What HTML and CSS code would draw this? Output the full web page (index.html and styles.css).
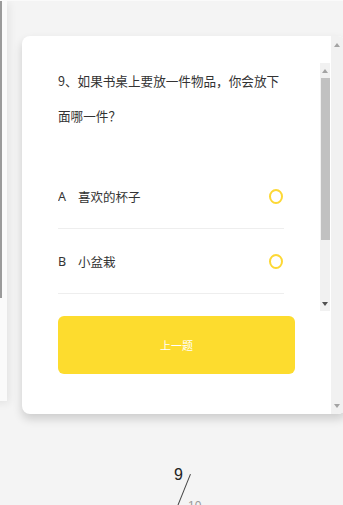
FILE: index.html
```html
<!DOCTYPE html>
<html lang="zh">
<head>
<meta charset="utf-8">
<link rel="stylesheet" href="styles.css">
</head>
<body>
<div class="stage">
  <div class="prev-card"><div class="prev-thumb"></div></div>
  <div class="card">
    <div class="card-body">
      <div class="scroll-area">
        <div class="scroll-content">
          <div class="question">9、如果书桌上要放一件物品，你会放下面哪一件？</div>
          <div class="options">
            <div class="option"><span class="opt-letter">A</span><span class="opt-text">喜欢的杯子</span><span class="radio"></span></div>
            <div class="option"><span class="opt-letter">B</span><span class="opt-text">小盆栽</span><span class="radio"></span></div>
          </div>
        </div>
        <div class="inner-bar">
          <div class="arrow up light"></div>
          <div class="thumb"></div>
          <div class="track"></div>
          <div class="arrow down dark"></div>
        </div>
      </div>
      <div class="btn">上一题</div>
    </div>
    <div class="outer-bar">
      <div class="arrow up light"></div>
      <div class="arrow down light"></div>
    </div>
  </div>
  <div class="pager">
    <span class="cur">9</span>
    <span class="slash"></span>
    <span class="total">10</span>
  </div>
</div>
</body>
</html>
```
FILE: styles.css
```css
* { box-sizing: border-box; }
html, body { margin: 0; padding: 0; }
body {
  background: #f4f4f4;
  font-family: "Noto Sans CJK SC", "Noto Sans", sans-serif;
  color: #333;
  overflow: hidden;
}
.stage {
  position: relative;
  width: 343px;
  height: 505px;
  overflow: hidden;
  padding-top: 35px;
  padding-left: 22px;
  border-top: 1px solid #fafafa;
}
.prev-card {
  position: absolute;
  left: -10px;
  top: 0;
  width: 17px;
  height: 400px;
  background: #fafafa;
  box-shadow: 2px 2px 8px rgba(0,0,0,0.08);
}
.prev-thumb {
  position: absolute;
  left: 10px;
  top: 0;
  width: 2px;
  height: 297px;
  background: #9a9a9a;
}
.card {
  width: 324px;
  height: 378px;
  background: #fff;
  border-radius: 8px;
  box-shadow: 0 5px 10px rgba(0,0,0,0.16);
  display: flex;
  overflow: hidden;
}
.card-body {
  width: 309px;
  padding: 27px 0 0 36px;
}
.scroll-area {
  display: flex;
  height: 248px;
}
.scroll-content {
  width: 262px;
  overflow: hidden;
  padding-right: 36px;
}
.question {
  font-size: 12.6px;
  line-height: 35px;
  color: #333;
}
.options { margin-top: 31px; }
.option {
  height: 65px;
  border-bottom: 1px solid #eeeeee;
  display: flex;
  align-items: center;
  font-size: 12.5px;
  color: #333;
}
.opt-letter { width: 20px; font-family: "Noto Sans", sans-serif; }
.opt-text { flex: 1; }
.radio {
  width: 14px;
  height: 15px;
  border: 2px solid #fdd835;
  border-radius: 50%;
  margin-right: 1px;
}
.inner-bar {
  width: 10px;
  background: #f1f1f1;
  display: flex;
  flex-direction: column;
}
.inner-bar .thumb {
  height: 162px;
  background: #c1c1c1;
  margin: 0 0.5px;
}
.inner-bar .track { flex: 1; }
.arrow {
  height: 15px;
  display: flex;
  align-items: center;
  justify-content: center;
}
.arrow::before {
  content: "";
  width: 0;
  height: 0;
  border-left: 3px solid transparent;
  border-right: 3px solid transparent;
}
.arrow.up::before { border-bottom: 4px solid #a3a3a3; }
.arrow.down::before { border-top: 4px solid #a3a3a3; }
.arrow.down.dark::before { border-top-color: #505050; }
.btn {
  margin-top: 5px;
  width: 237px;
  height: 58px;
  border-radius: 6px;
  background: #fddc2e;
  color: #fff;
  font-size: 11px;
  display: flex;
  align-items: center;
  justify-content: center;
}
.outer-bar {
  width: 15px;
  background: #f1f1f1;
  display: flex;
  flex-direction: column;
  justify-content: space-between;
  padding: 1px 0 1px 0;
}
.outer-bar .arrow { width: 12px; }
.pager {
  position: absolute;
  left: 174px;
  top: 465px;
  width: 40px;
  height: 45px;
}
.cur {
  position: absolute;
  left: 0;
  top: 0;
  font-family: "Liberation Sans", sans-serif;
  font-size: 16px;
  color: #222;
}
.slash {
  position: absolute;
  left: 16px;
  top: 8px;
  width: 1px;
  height: 34px;
  background: #444;
  transform: rotate(22deg);
  transform-origin: top left;
}
.total {
  position: absolute;
  left: 14px;
  top: 33px;
  font-family: "Liberation Sans", sans-serif;
  font-size: 12px;
  color: #999;
}
```
